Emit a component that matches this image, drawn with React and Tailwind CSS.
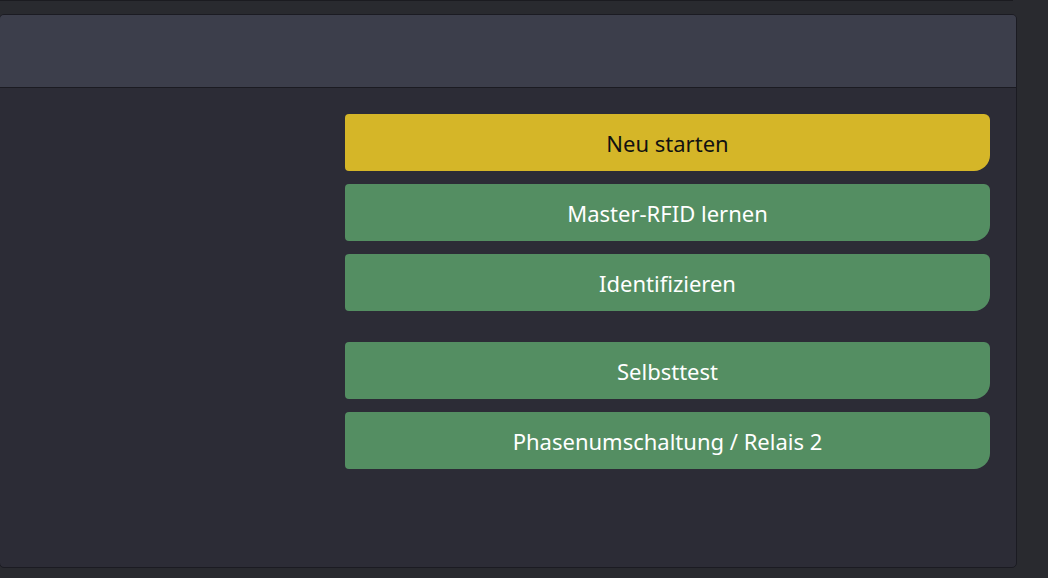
export default function App() {
  const primary = [
    { label: 'Neu starten', tone: 'yellow' },
    { label: 'Master-RFID lernen', tone: 'green' },
    { label: 'Identifizieren', tone: 'green' },
  ];
  const secondary = ['Selbsttest', 'Phasenumschaltung / Relais 2'];

  const btn =
    'flex h-[57px] w-full items-center justify-center rounded-tl-[4px] rounded-bl-[4px] rounded-tr-[6px] rounded-br-[16px] text-[22px] leading-none';

  return (
    <div className="h-[578px] w-[1048px] overflow-hidden bg-[#292a2f] font-['Noto_Sans','Open_Sans',sans-serif]">
      <div className="h-px w-[1013px] bg-[#1b1b20]" />
      <div className="mt-[13px] -ml-px flex h-[554px] w-[1018px] flex-col overflow-hidden rounded-[5px] border border-[#1b1b22] bg-[#2c2c36]">
        <div className="h-[73px] shrink-0 border-b border-[#1b1b22] bg-[#3c3e4b]" />
        <div className="flex justify-end pr-[26px] pt-[26px]">
          <div className="flex w-[645px] flex-col">
            <div className="flex flex-col gap-[13px]">
              {primary.map((b) => (
                <button
                  key={b.label}
                  className={
                    b.tone === 'yellow'
                      ? `${btn} bg-[#d5b628] text-[#111111]`
                      : `${btn} bg-[#548e62] text-white`
                  }
                >
                  {b.label}
                </button>
              ))}
            </div>
            <div className="mt-[31px] flex flex-col gap-[13px]">
              {secondary.map((label) => (
                <button key={label} className={`${btn} bg-[#548e62] text-white`}>
                  {label}
                </button>
              ))}
            </div>
          </div>
        </div>
      </div>
    </div>
  );
}
